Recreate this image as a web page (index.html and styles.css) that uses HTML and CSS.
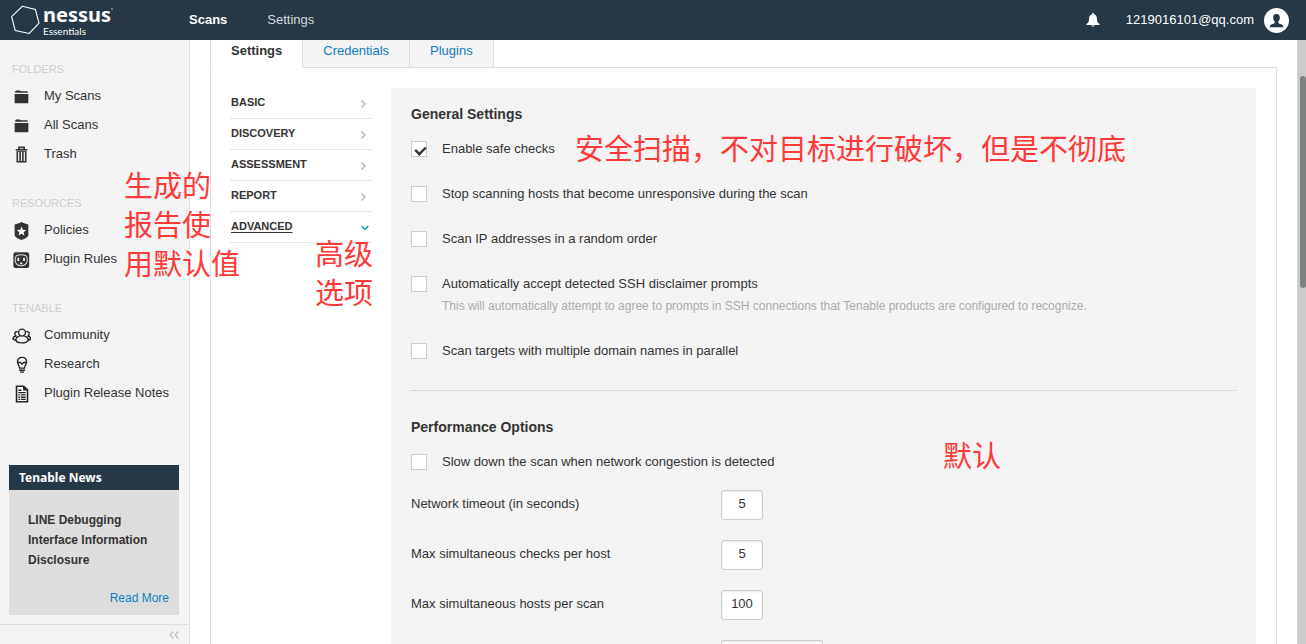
FILE: index.html
```html
<!DOCTYPE html>
<html lang="en">
<head>
<meta charset="utf-8">
<title>Nessus Essentials / Scans / Settings</title>
<link rel="stylesheet" href="styles.css">
</head>
<body>
<div class="app">
  <header class="topbar">
    <a class="logo" href="#">
      <svg class="logo-mark" viewBox="0 0 30 30" aria-hidden="true"><path d="M11.5 1.2 24.4 4.5 28 18.2 18.3 28.5 4.2 25.5.6 11.7z" fill="none" stroke="#fff" stroke-width="1.1"/></svg>
      <span class="logo-text"><span class="logo-name">nessus<svg class="logo-tm" viewBox="0 0 2 2" aria-hidden="true"><circle cx="1" cy="1" r="1" fill="#8a949d"/></svg></span><span class="logo-edition">Essentials</span></span>
    </a>
    <nav class="topnav">
      <a class="topnav-link is-active" href="#">Scans</a>
      <a class="topnav-link" href="#">Settings</a>
    </nav>
    <div class="account">
      <button class="bell" type="button" aria-label="Notifications">
        <svg width="14" height="16" viewBox="0 0 14 16"><path d="M7 1C8 1 8 2 8 2.300C10.500 3 11 5 11 7.500C11 10 12 11 13.500 12V13H.500V12C2 11 3 10 3 7.500C3 5 3.500 3 6 2.300C6 2 6 1 7 1zM5.300 13.500H8.700C8.500 14.900 5.500 14.900 5.300 13.500z" fill="#fff"/></svg>
      </button>
      <a class="account-name" href="#">1219016101@qq.com</a>
      <button class="avatar" type="button" aria-label="Account">
        <svg width="25" height="25" viewBox="0 0 25 25"><circle cx="12.500" cy="12.500" r="12.500" fill="#fff"/><path d="M12.500 6C15 6 16 7.800 15.800 10C15.700 11.800 15 12.800 14.300 13.700C14.200 15.300 15 15.600 16.500 16.100C18.300 16.700 19.200 17.300 19.400 19.300H5.600C5.800 17.300 6.700 16.700 8.500 16.100C10 15.600 10.800 15.300 10.700 13.700C10 12.800 9.300 11.800 9.200 10C9 7.800 10 6 12.500 6z" fill="#263746"/></svg>
      </button>
    </div>
  </header>

  <div class="body">
    <aside class="sidebar">
      <div class="sidebar-scroll">
        <nav class="group">
          <h2 class="group-title">FOLDERS</h2>
          <a class="item" href="#"><svg class="icon" viewBox="0 0 18 18"><path d="M3 4V3L4 2.300H7.500L8.500 3H14.500L15.200 4.600H3z" fill="#333"/><path d="M2.500 5.600H15.500V14Q15.500 14.500 15 14.500H3Q2.500 14.500 2.500 14z" fill="#333"/></svg>My Scans</a>
          <a class="item" href="#"><svg class="icon" viewBox="0 0 18 18"><path d="M3 4V3L4 2.300H7.500L8.500 3H14.500L15.200 4.600H3z" fill="#333"/><path d="M2.500 5.600H15.500V14Q15.500 14.500 15 14.500H3Q2.500 14.500 2.500 14z" fill="#333"/></svg>All Scans</a>
          <a class="item" href="#"><svg class="icon" viewBox="0 0 18 18"><path d="M6.500 3V1.300H11.500V3M3.500 3.500H14.500M5 5.500V14.900H13V5.500M7.700 5.500V14.500M10.300 5.500V14.500" fill="none" stroke="#333" stroke-width="1.500"/><path d="M4.300 5H13.700" stroke="#333"/></svg>Trash</a>
        </nav>
        <nav class="group">
          <h2 class="group-title">RESOURCES</h2>
          <a class="item" href="#"><svg class="icon" viewBox="0 0 18 18"><path d="M9 0 11.500 1.300 15.500 2.300V12.500Q15.500 14.500 9 17Q2.500 14.500 2.500 12.500V2.300L6.500 1.300z" fill="#333"/><path d="M9 4.200 10.300 7.300 13.500 7.500 11 9.700 11.800 12.900 9 11.200 6.200 12.900 7 9.700 4.500 7.500 7.700 7.300z" fill="#fff"/></svg>Policies</a>
          <a class="item" href="#"><svg class="icon" viewBox="0 0 18 18"><rect x="1.300" y="1.300" width="15" height="14.800" rx="2" fill="#333"/><path d="M4.200 4.500Q8.700 2.500 13.200 4.500Q14.700 6 14.400 9.500Q13.500 13.700 8.700 14Q3.900 13.700 3 9.500Q2.700 6 4.200 4.500z" fill="none" stroke="#ddd"/><path d="M6 6.500V9.500M11.400 6.500V9.500" stroke="#fff" stroke-width="1.600"/><path d="M7.500 12.500Q7.500 10.700 8.700 10.700T9.900 12.500z" fill="#fff"/></svg>Plugin Rules</a>
        </nav>
        <nav class="group">
          <h2 class="group-title">TENABLE</h2>
          <a class="item" href="#"><svg class="icon" viewBox="0 0 18 18"><g fill="none" stroke="#222" stroke-width="1.300"><circle cx="9.500" cy="5.300" r="3.300"/><path d="M7.300 8.600C5 9.300 3.700 10.500 3.700 12C3.700 14 6.500 15 9.500 15S15.300 14 15.300 12C15.300 10.500 14 9.300 11.700 8.600M5.300 4.500C3.300 4 2.300 5.500 2.800 7C3 7.700 3.400 8 3.800 8.500C2 9 1 9.500 1 11C1 12 2 12.300 3.500 12.300M13.700 4.500C15.700 4 16.700 5.500 16.200 7C16 7.700 15.600 8 15.200 8.500C17 9 17.500 9.500 17.500 11C17.500 12 17 12.300 15.500 12.300"/></g></svg>Community</a>
          <a class="item" href="#"><svg class="icon" viewBox="0 0 18 18"><path d="M7 11C7 9 5.200 8 5.200 5.600C5.200 3 7 1.300 9.500 1.300S13.800 3 13.800 5.600C13.800 8 12 9 12 11M5 6.200H8L9.500 7.700 11 6.200H14M6.500 11.500H12.500M6.700 13.500H12.300M7.700 15.300H11.300" fill="none" stroke="#222" stroke-width="1.300"/></svg>Research</a>
          <a class="item" href="#"><svg class="icon" viewBox="0 0 18 18"><path d="M4.300 1.200H11L14.700 4.700V15.800H4.300z" fill="#fff" stroke="#222" stroke-width="1.500"/><path d="M10.500 1.200V5.200H14.700z" fill="#222"/><path d="M6 5H9M6 7.200H13M6 9.400H7.500M8.300 9.400H13M6 11.600H7.500M8.300 11.600H13M6 13.600H7.500M8.300 13.600H13" stroke="#222" stroke-width="1.300"/></svg>Plugin Release Notes</a>
        </nav>
      </div>
      <section class="news">
        <h2 class="news-title">Tenable News</h2>
        <div class="news-body">
          <p class="news-text">LINE Debugging Interface Information Disclosure</p>
          <a class="news-more" href="#">Read More</a>
        </div>
      </section>
      <button class="collapse" type="button" aria-label="Collapse sidebar">
        <svg width="12" height="10" viewBox="0 0 12 10"><path d="M5.500 1.500 2 5 5.500 8.500M10.500 1.500 7 5 10.500 8.500" fill="none" stroke="#bbb" stroke-width="1.200"/></svg>
      </button>
    </aside>

    <main class="main">
      <nav class="tabs">
        <a class="tab is-active" href="#">Settings</a>
        <a class="tab" href="#">Credentials</a>
        <a class="tab" href="#">Plugins</a>
      </nav>
      <div class="panel">
        <nav class="sections">
          <a class="section-link" href="#">BASIC<svg class="chevron" viewBox="0 0 8 8"><path d="M2.500 .500 6 4 2.500 7.500"/></svg></a>
          <a class="section-link" href="#">DISCOVERY<svg class="chevron" viewBox="0 0 8 8"><path d="M2.500 .500 6 4 2.500 7.500"/></svg></a>
          <a class="section-link" href="#">ASSESSMENT<svg class="chevron" viewBox="0 0 8 8"><path d="M2.500 .500 6 4 2.500 7.500"/></svg></a>
          <a class="section-link" href="#">REPORT<svg class="chevron" viewBox="0 0 8 8"><path d="M2.500 .500 6 4 2.500 7.500"/></svg></a>
          <a class="section-link is-open" href="#"><span>ADVANCED</span><svg class="chevron" viewBox="0 0 8 8"><path d="M.700 2 4 5.300 7.300 2"/></svg></a>
        </nav>
        <form class="settings">
          <section class="block">
            <h2 class="block-title">General Settings</h2>
            <div class="checks">
              <label class="check"><input class="box" type="checkbox" checked><span>Enable safe checks</span></label>
              <label class="check"><input class="box" type="checkbox"><span>Stop scanning hosts that become unresponsive during the scan</span></label>
              <label class="check"><input class="box" type="checkbox"><span>Scan IP addresses in a random order</span></label>
              <label class="check"><input class="box" type="checkbox"><span>Automatically accept detected SSH disclaimer prompts<small class="hint">This will automatically attempt to agree to prompts in SSH connections that Tenable products are configured to recognize.</small></span></label>
              <label class="check"><input class="box" type="checkbox"><span>Scan targets with multiple domain names in parallel</span></label>
            </div>
          </section>
          <section class="block">
            <h2 class="block-title">Performance Options</h2>
            <div class="checks">
              <label class="check"><input class="box" type="checkbox"><span>Slow down the scan when network congestion is detected</span></label>
            </div>
            <div class="fields">
              <div class="field"><label for="timeout">Network timeout (in seconds)</label><input class="number" id="timeout" type="text" value="5"></div>
              <div class="field"><label for="checks">Max simultaneous checks per host</label><input class="number" id="checks" type="text" value="5"></div>
              <div class="field"><label for="hosts">Max simultaneous hosts per scan</label><input class="number" id="hosts" type="text" value="100"></div>
              <div class="field"><span></span><input class="number wide" type="text" aria-label="Session limit"></div>
            </div>
          </section>
        </form>
      </div>
    </main>
    <div class="scrollbar"><div class="thumb"></div></div>
  </div>

  <p class="note note-report">生成的<br>报告使<br>用默认值</p>
  <p class="note note-advanced">高级<br>选项</p>
  <p class="note note-safe">安全扫描，不对目标进行破坏，但是不彻底</p>
  <p class="note note-default">默认</p>
</div>
</body>
</html>
```

FILE: styles.css
```css
* { box-sizing: border-box; }

body {
  margin: 0;
  background: #fff;
  color: #333;
  font: 13px/20px "Liberation Sans", Arial, sans-serif;
}

a { color: inherit; text-decoration: none; }
h2, p { margin: 0; }
svg { display: block; flex: none; }
button { padding: 0; border: 0; background: none; cursor: pointer; }

.app {
  position: relative;
  display: flex;
  flex-direction: column;
  height: 100vh;
  overflow: hidden;
}

/* Top bar */
.topbar {
  display: flex;
  align-items: center;
  flex: none;
  height: 40px;
  padding: 0 17px 0 11px;
  background: #263746;
  color: #fff;
}
.logo { display: flex; align-items: center; gap: 2px; width: 178px; }
.logo-mark { width: 30px; height: 30px; }
.logo-text { display: flex; flex-direction: column; }
.logo-name { display: flex; font: 700 20px/22px "Noto Sans", sans-serif; }
.logo-tm { width: 2px; height: 2px; margin-top: 4px; }
.logo-edition { font: 10px/10px Lato, sans-serif; }
.topnav { display: flex; gap: 40px; }
.topnav-link { color: #d5d9dc; }
.topnav-link.is-active { color: #fff; font-weight: 700; }
.account { display: flex; align-items: center; margin-left: auto; }
.bell { margin-right: 26px; }
.avatar { margin-left: 10px; }

.body { display: flex; flex: 1; min-height: 0; }

/* Sidebar */
.sidebar {
  display: flex;
  flex-direction: column;
  flex: none;
  width: 190px;
  border-right: 1px solid #ddd;
  background: #f4f4f4;
}
.sidebar-scroll {
  display: flex;
  flex: 1;
  flex-direction: column;
  gap: 25px;
  min-height: 0;
  padding: 19px 12px 0;
}
.group-title { margin-bottom: 2px; color: #ccc; font-size: 11px; font-weight: 400; }
.item { display: flex; align-items: center; gap: 13px; height: 29px; white-space: nowrap; }
.icon { width: 19px; height: 19px; margin-top: 3px; }
.news { margin: 0 10px 9px 9px; background: #ddd; }
.news-title {
  padding: 3px 10px 2px;
  background: #263746;
  color: #fff;
  font: 700 12px/20px "Noto Sans", sans-serif;
}
.news-body { display: flex; flex-direction: column; gap: 18px; padding: 20px 10px 7px 19px; font-size: 12px; }
.news-text { font-weight: 700; }
.news-more { align-self: flex-end; color: #0f7dc2; }
.collapse {
  display: flex;
  align-items: center;
  justify-content: flex-end;
  height: 20px;
  padding-right: 9px;
  border-top: 1px solid #ddd;
}

/* Scan editor */
.main {
  display: flex;
  flex: 1;
  flex-direction: column;
  min-width: 0;
  padding: 0 20px;
  overflow: hidden;
}
.tabs { display: flex; flex: none; height: 27px; }
.tab {
  z-index: 1;
  height: 28px;
  padding: 1px 20px 0;
  border-right: 1px solid #ddd;
  border-bottom: 1px solid #ddd;
  background: #f4f4f4;
  color: #0f7dc2;
}
.tab.is-active {
  border-bottom-color: #fff;
  border-left: 1px solid #ddd;
  background: #fff;
  color: #333;
  font-weight: 700;
}
.panel {
  display: flex;
  flex: 1 0 auto;
  align-items: flex-start;
  gap: 20px;
  padding: 20px;
  border: 1px solid #ddd;
  border-bottom: 0;
}
.sections { flex: none; width: 140px; }
.section-link {
  display: flex;
  align-items: center;
  justify-content: space-between;
  height: 31px;
  padding-right: 2px;
  padding-bottom: 2px;
  border-bottom: 1px dotted #ccc;
  font-size: 11px;
  font-weight: 700;
}
.section-link.is-open { text-decoration: underline; text-underline-offset: 2px; }
.chevron { width: 8px; height: 8px; margin: 4px 2px 0 0; fill: none; stroke: #bbb; stroke-width: 1.5; }
.is-open .chevron { margin-right: 0; stroke: #0f9db2; }

.settings { flex: 1; min-width: 0; padding: 16px 20px; background: #f4f4f4; }
.block + .block { margin-top: 29px; padding-top: 26px; border-top: 1px dotted #bbb; }
.block-title { margin-bottom: 15px; font-size: 14px; line-height: 20px; }
.checks { display: flex; flex-direction: column; align-items: flex-start; gap: 25px; }
.check { display: flex; gap: 15px; }
.box {
  flex: none;
  width: 16px;
  height: 16px;
  margin: 2px 0 0;
  border: 1px solid #ccc;
  background: #fff;
  appearance: none;
}
.box:checked::before {
  content: "";
  display: block;
  width: 10px;
  height: 6px;
  margin: 3px 0 0 2px;
  border-bottom: 3px solid #333;
  border-left: 3px solid #333;
  transform: rotate(-45deg) scale(0.8);
}
.hint { display: block; margin-top: 2px; color: #aaa; font-size: 12px; }
.fields { display: flex; flex-direction: column; gap: 20px; margin-top: 18px; }
.field { display: grid; grid-template-columns: 310px auto; justify-content: start; line-height: 28px; }
.number {
  width: 42px;
  height: 30px;
  padding: 0 0 3px;
  border: 1px solid #ccc;
  border-radius: 3px;
  background: #fff;
  box-shadow: inset 0 1px 2px #e8e8e8;
  color: #333;
  font: inherit;
  text-align: center;
}
.number.wide { width: 102px; }

.scrollbar { flex: none; width: 9px; padding: 36px 0 0 3px; background: #ccc; }
.thumb { height: 212px; border-radius: 3px; background: #7c8080; }

/* Annotations lying over the page */
.note {
  position: absolute;
  z-index: 2;
  color: #ff3838;
  font: 29px/39px "Noto Sans CJK SC", sans-serif;
  white-space: nowrap;
}
.note-report { top: 165px; left: 124px; }
.note-advanced { top: 233px; left: 315px; }
.note-safe { top: 128px; left: 575px; }
.note-default { top: 435px; left: 943px; }
```
